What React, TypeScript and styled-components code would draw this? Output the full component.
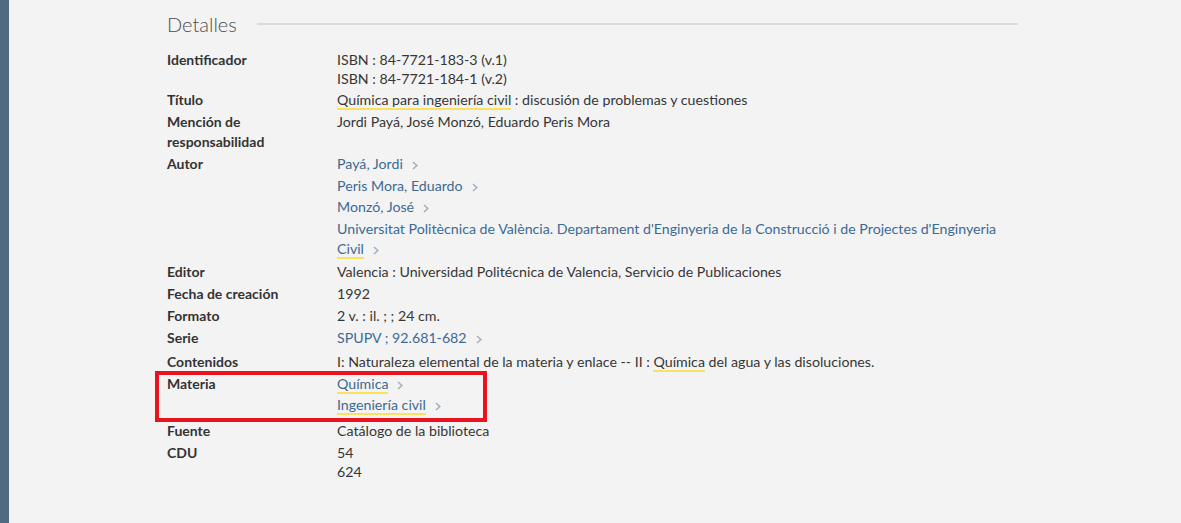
import React from "react";
import styled, { createGlobalStyle } from "styled-components";

const GlobalStyle = createGlobalStyle`
  html, body {
    margin: 0;
    padding: 0;
    background: #f3f3f3;
  }
  body {
    font-family: Lato, "Noto Sans", "Liberation Sans", sans-serif;
    font-size: 14px;
    color: #363636;
  }
`;

const Page = styled.div`
  min-height: 523px;
  border-left: 9px solid #4f6a82;
  padding: 12px 0 20px 158px;
  box-sizing: border-box;
`;

const Section = styled.section`
  width: 851px;
`;

const Heading = styled.div`
  display: flex;
  align-items: center;
  gap: 20px;
  margin-bottom: 14px;
`;

const HeadingText = styled.h2`
  margin: 0;
  font-size: 20px;
  font-weight: 300;
  color: #4e4e4e;
  line-height: 24px;
`;

const HeadingRule = styled.div`
  flex: 1;
  height: 2px;
  background: #dcdcdc;
  margin-top: -1px;
`;

const List = styled.dl`
  margin: 0;
  display: flex;
  flex-direction: column;
  gap: 2px;
`;

const Row = styled.div<{ $spaced?: boolean }>`
  position: relative;
  display: grid;
  grid-template-columns: 170px 1fr;
  line-height: 20px;
  margin-bottom: ${(p) => (p.$spaced ? "2px" : "0")};
`;

const Label = styled.dt`
  font-weight: 700;
  color: #333;
  padding-right: 10px;
`;

const Value = styled.dd`
  margin: 0;
  max-width: 668px;
  font-size: 14.2px;
  display: flex;
  flex-direction: column;
`;

const Line = styled.div<{ $tight?: boolean }>`
  line-height: ${(p) => (p.$tight ? "19px" : "20px")};
`;

const LinkItem = styled.a`
  display: block;
  color: #3b6a94;
  text-decoration: none;
  margin-bottom: 1.5px;
`;

const Mark = styled.span`
  border-bottom: 2px solid #fce15f;
`;

const Chevron = styled.svg`
  width: 6px;
  height: 9px;
  margin-left: 9px;
  vertical-align: -1px;
`;

const Highlight = styled.div`
  position: absolute;
  left: -12px;
  top: -3px;
  width: 332px;
  height: 51px;
  border: 4px solid #e8131f;
  box-sizing: border-box;
  pointer-events: none;
`;

type Part = string | { mark: string };

const Text = ({ parts }: { parts: Part[] }) => (
  <>
    {parts.map((p, i) =>
      typeof p === "string" ? <React.Fragment key={i}>{p}</React.Fragment> : <Mark key={i}>{p.mark}</Mark>
    )}
  </>
);

const Arrow = () => (
  <Chevron viewBox="0 0 6 9">
    <polyline points="1,1 4.8,4.5 1,8" fill="none" stroke="#9fb0c0" strokeWidth="1.5" />
  </Chevron>
);

const Link = ({ parts }: { parts: Part[] }) => (
  <LinkItem href="#">
    <Text parts={parts} />
    <Arrow />
  </LinkItem>
);

export default function App() {
  return (
    <Page>
      <GlobalStyle />
      <Section>
        <Heading>
          <HeadingText>Detalles</HeadingText>
          <HeadingRule />
        </Heading>
        <List>
          <Row>
            <Label>Identificador</Label>
            <Value>
              <Line $tight>ISBN : 84-7721-183-3 (v.1)</Line>
              <Line $tight>ISBN : 84-7721-184-1 (v.2)</Line>
            </Value>
          </Row>
          <Row>
            <Label>Título</Label>
            <Value>
              <Line>
                <Text parts={[{ mark: "Química para ingeniería civil" }, " : discusión de problemas y cuestiones"]} />
              </Line>
            </Value>
          </Row>
          <Row>
            <Label>Mención de responsabilidad</Label>
            <Value>
              <Line>Jordi Payá, José Monzó, Eduardo Peris Mora</Line>
            </Value>
          </Row>
          <Row>
            <Label>Autor</Label>
            <Value>
              <Link parts={["Payá, Jordi"]} />
              <Link parts={["Peris Mora, Eduardo"]} />
              <Link parts={["Monzó, José"]} />
              <Link
                parts={[
                  "Universitat Politècnica de València. Departament d'Enginyeria de la Construcció i de Projectes d'Enginyeria ",
                  { mark: "Civil" },
                ]}
              />
            </Value>
          </Row>
          <Row>
            <Label>Editor</Label>
            <Value>
              <Line>Valencia : Universidad Politécnica de Valencia, Servicio de Publicaciones</Line>
            </Value>
          </Row>
          <Row>
            <Label>Fecha de creación</Label>
            <Value>
              <Line>1992</Line>
            </Value>
          </Row>
          <Row>
            <Label>Formato</Label>
            <Value>
              <Line>2 v. : il. ; ; 24 cm.</Line>
            </Value>
          </Row>
          <Row>
            <Label>Serie</Label>
            <Value>
              <Link parts={["SPUPV ; 92.681-682"]} />
            </Value>
          </Row>
          <Row>
            <Label>Contenidos</Label>
            <Value>
              <Line>
                <Text
                  parts={[
                    "I: Naturaleza elemental de la materia y enlace -- II : ",
                    { mark: "Química" },
                    " del agua y las disoluciones.",
                  ]}
                />
              </Line>
            </Value>
          </Row>
          <Row $spaced>
            <Label>Materia</Label>
            <Value>
              <Link parts={[{ mark: "Química" }]} />
              <Link parts={[{ mark: "Ingeniería civil" }]} />
            </Value>
            <Highlight />
          </Row>
          <Row>
            <Label>Fuente</Label>
            <Value>
              <Line>Catálogo de la biblioteca</Line>
            </Value>
          </Row>
          <Row>
            <Label>CDU</Label>
            <Value>
              <Line $tight>54</Line>
              <Line $tight>624</Line>
            </Value>
          </Row>
        </List>
      </Section>
    </Page>
  );
}
